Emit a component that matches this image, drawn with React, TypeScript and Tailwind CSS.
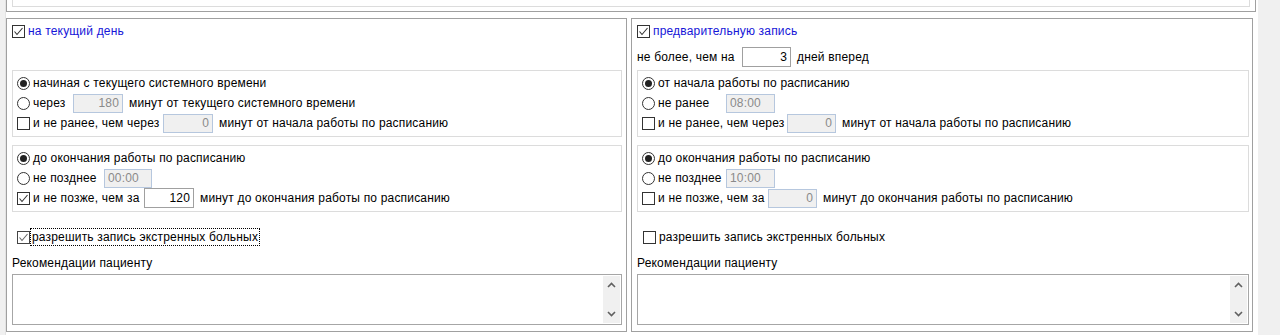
import type { ReactNode } from 'react';

function Check({ checked = false, soft = false }: { checked?: boolean; soft?: boolean }) {
  return (
    <span
      className={`w-[13px] h-[13px] shrink-0 bg-white border flex items-center justify-center ${
        soft ? 'border-[#444]' : 'border-[#333]'
      }`}
    >
      {checked && (
        <svg width="11" height="11" viewBox="0 0 11 11">
          <path
            d="M1.5 5.5 L4 8.5 L9.5 2"
            fill="none"
            stroke={soft ? '#666' : '#333'}
            strokeWidth="1.1"
          />
        </svg>
      )}
    </span>
  );
}

function Radio({ checked = false }: { checked?: boolean }) {
  return (
    <span className="w-[13px] h-[13px] shrink-0 rounded-full bg-white border border-[#333] flex items-center justify-center">
      {checked && <span className="w-[7px] h-[7px] rounded-full bg-[#222]" />}
    </span>
  );
}

function Field({
  value,
  disabled = false,
  right = true,
  w = 'w-[50px]',
  h = 'h-[19px]',
}: {
  value: string;
  disabled?: boolean;
  right?: boolean;
  w?: string;
  h?: string;
}) {
  return (
    <span
      className={`${w} ${h} shrink-0 border flex items-center px-[3px] ${
        right ? 'justify-end' : 'justify-start'
      } ${
        disabled
          ? 'bg-[#f0f0f0] border-[#b6c7de] text-[#8a8a8a]'
          : 'bg-white border-[#a0a0a0] text-black'
      }`}
    >
      {value}
    </span>
  );
}

function Row({ children }: { children: ReactNode }) {
  return <div className="h-5 flex items-center whitespace-nowrap">{children}</div>;
}

function Group({ children }: { children: ReactNode }) {
  return (
    <div className="border border-[#dcdcdc] pl-[4px] pt-[2px] pb-[3px]">{children}</div>
  );
}

function Notes() {
  return (
    <div className="mt-[3px] h-[51px] border border-[#a6a6a6] bg-white flex justify-end p-[1px]">
      <div className="w-[17px] bg-[#f0f0f0] flex flex-col items-center justify-between py-[6px]">
        <svg width="9" height="6" viewBox="0 0 9 6">
          <path d="M1 5 L4.5 1.5 L8 5" fill="none" stroke="#606060" strokeWidth="1.6" />
        </svg>
        <svg width="9" height="6" viewBox="0 0 9 6">
          <path d="M1 1 L4.5 4.5 L8 1" fill="none" stroke="#606060" strokeWidth="1.6" />
        </svg>
      </div>
    </div>
  );
}

function TodayPanel() {
  return (
    <div className="w-[621px] h-[314px] border border-[#a0a0a0] pl-[5px] pr-[4px] pt-[2px]">
      <Row>
        <span className="flex items-center gap-[3px]">
          <Check checked />
          <span className="text-[#1616d8]">на текущий день</span>
        </span>
      </Row>
      <div className="h-[22px] mt-[5px]" />
      <div className="mt-[2px]">
        <Group>
          <Row>
            <Radio checked />
            <span className="ml-[3px]">начиная с текущего системного времени</span>
          </Row>
          <Row>
            <Radio />
            <span className="ml-[3px] w-[40px]">через</span>
            <Field value="180" disabled />
            <span className="ml-[6px]">минут от текущего системного времени</span>
          </Row>
          <Row>
            <Check />
            <span className="ml-[3px] w-[130px]">и не ранее, чем через</span>
            <Field value="0" disabled />
            <span className="ml-[6px]">минут от начала работы по расписанию</span>
          </Row>
        </Group>
      </div>
      <div className="mt-[8px]">
        <Group>
          <Row>
            <Radio checked />
            <span className="ml-[3px]">до окончания работы по расписанию</span>
          </Row>
          <Row>
            <Radio />
            <span className="ml-[3px] w-[71px]">не позднее</span>
            <Field value="00:00" disabled right={false} w="w-[48px]" />
          </Row>
          <Row>
            <Check checked />
            <span className="ml-[3px] w-[111px]">и не позже, чем за</span>
            <Field value="120" h="h-[20px]" />
            <span className="ml-[6px]">минут до окончания работы по расписанию</span>
          </Row>
        </Group>
      </div>
      <div className="mt-[15px] pl-[5px]">
        <Row>
          <Check checked soft />
          <span className="ml-[1px] px-[1px] outline outline-1 outline-dotted outline-black leading-[16px]">
            разрешить запись экстренных больных
          </span>
        </Row>
      </div>
      <div className="mt-[8px] h-[16px] flex items-center">Рекомендации пациенту</div>
      <Notes />
    </div>
  );
}

function AdvancePanel() {
  return (
    <div className="w-[622px] h-[314px] border border-[#a0a0a0] pl-[5px] pr-[3px] pt-[2px]">
      <Row>
        <span className="flex items-center gap-[3px]">
          <Check checked />
          <span className="text-[#1616d8]">предварительную запись</span>
        </span>
      </Row>
      <div className="h-[22px] mt-[5px] flex items-center whitespace-nowrap">
        <span className="w-[105px]">не более, чем на</span>
        <Field value="3" w="w-[49px]" h="h-[20px]" />
        <span className="ml-[6px]">дней вперед</span>
      </div>
      <div className="mt-[2px]">
        <Group>
          <Row>
            <Radio checked />
            <span className="ml-[3px]">от начала работы по расписанию</span>
          </Row>
          <Row>
            <Radio />
            <span className="ml-[3px] w-[68px]">не ранее</span>
            <Field value="08:00" disabled right={false} w="w-[49px]" />
          </Row>
          <Row>
            <Check />
            <span className="ml-[3px] w-[129px]">и не ранее, чем через</span>
            <Field value="0" disabled w="w-[49px]" />
            <span className="ml-[6px]">минут от начала работы по расписанию</span>
          </Row>
        </Group>
      </div>
      <div className="mt-[8px]">
        <Group>
          <Row>
            <Radio checked />
            <span className="ml-[3px]">до окончания работы по расписанию</span>
          </Row>
          <Row>
            <Radio />
            <span className="ml-[3px] w-[68px]">не позднее</span>
            <Field value="10:00" disabled right={false} w="w-[49px]" />
          </Row>
          <Row>
            <Check />
            <span className="ml-[3px] w-[110px]">и не позже, чем за</span>
            <Field value="0" disabled w="w-[49px]" />
            <span className="ml-[6px]">минут до окончания работы по расписанию</span>
          </Row>
        </Group>
      </div>
      <div className="mt-[15px] pl-[6px]">
        <Row>
          <Check />
          <span className="ml-[3px]">разрешить запись экстренных больных</span>
        </Row>
      </div>
      <div className="mt-[8px] h-[16px] flex items-center">Рекомендации пациенту</div>
      <Notes />
    </div>
  );
}

export default function App() {
  return (
    <div
      className="w-[1280px] h-[335px] overflow-hidden flex bg-white text-black text-[12px] tracking-[0.18px]"
      style={{ fontFamily: '"Liberation Sans", Arial, sans-serif' }}
    >
      <div className="w-[6px] shrink-0 bg-[#f0f0f0] border-r border-[#e3e3e3]" />
      <div className="w-[1252px] shrink-0">
        {/* top block, cut off by the window */}
        <div className="w-[1250px] h-[12px] border-x border-b border-[#a0a0a0] px-[5px]">
          <div className="h-[7px] border-x border-b border-[#dcdcdc]" />
        </div>
        <div className="mt-[6px] flex gap-[4px]">
          <TodayPanel />
          <AdvancePanel />
        </div>
      </div>
      <div className="flex-1 bg-[#f0f0f0]" />
    </div>
  );
}
